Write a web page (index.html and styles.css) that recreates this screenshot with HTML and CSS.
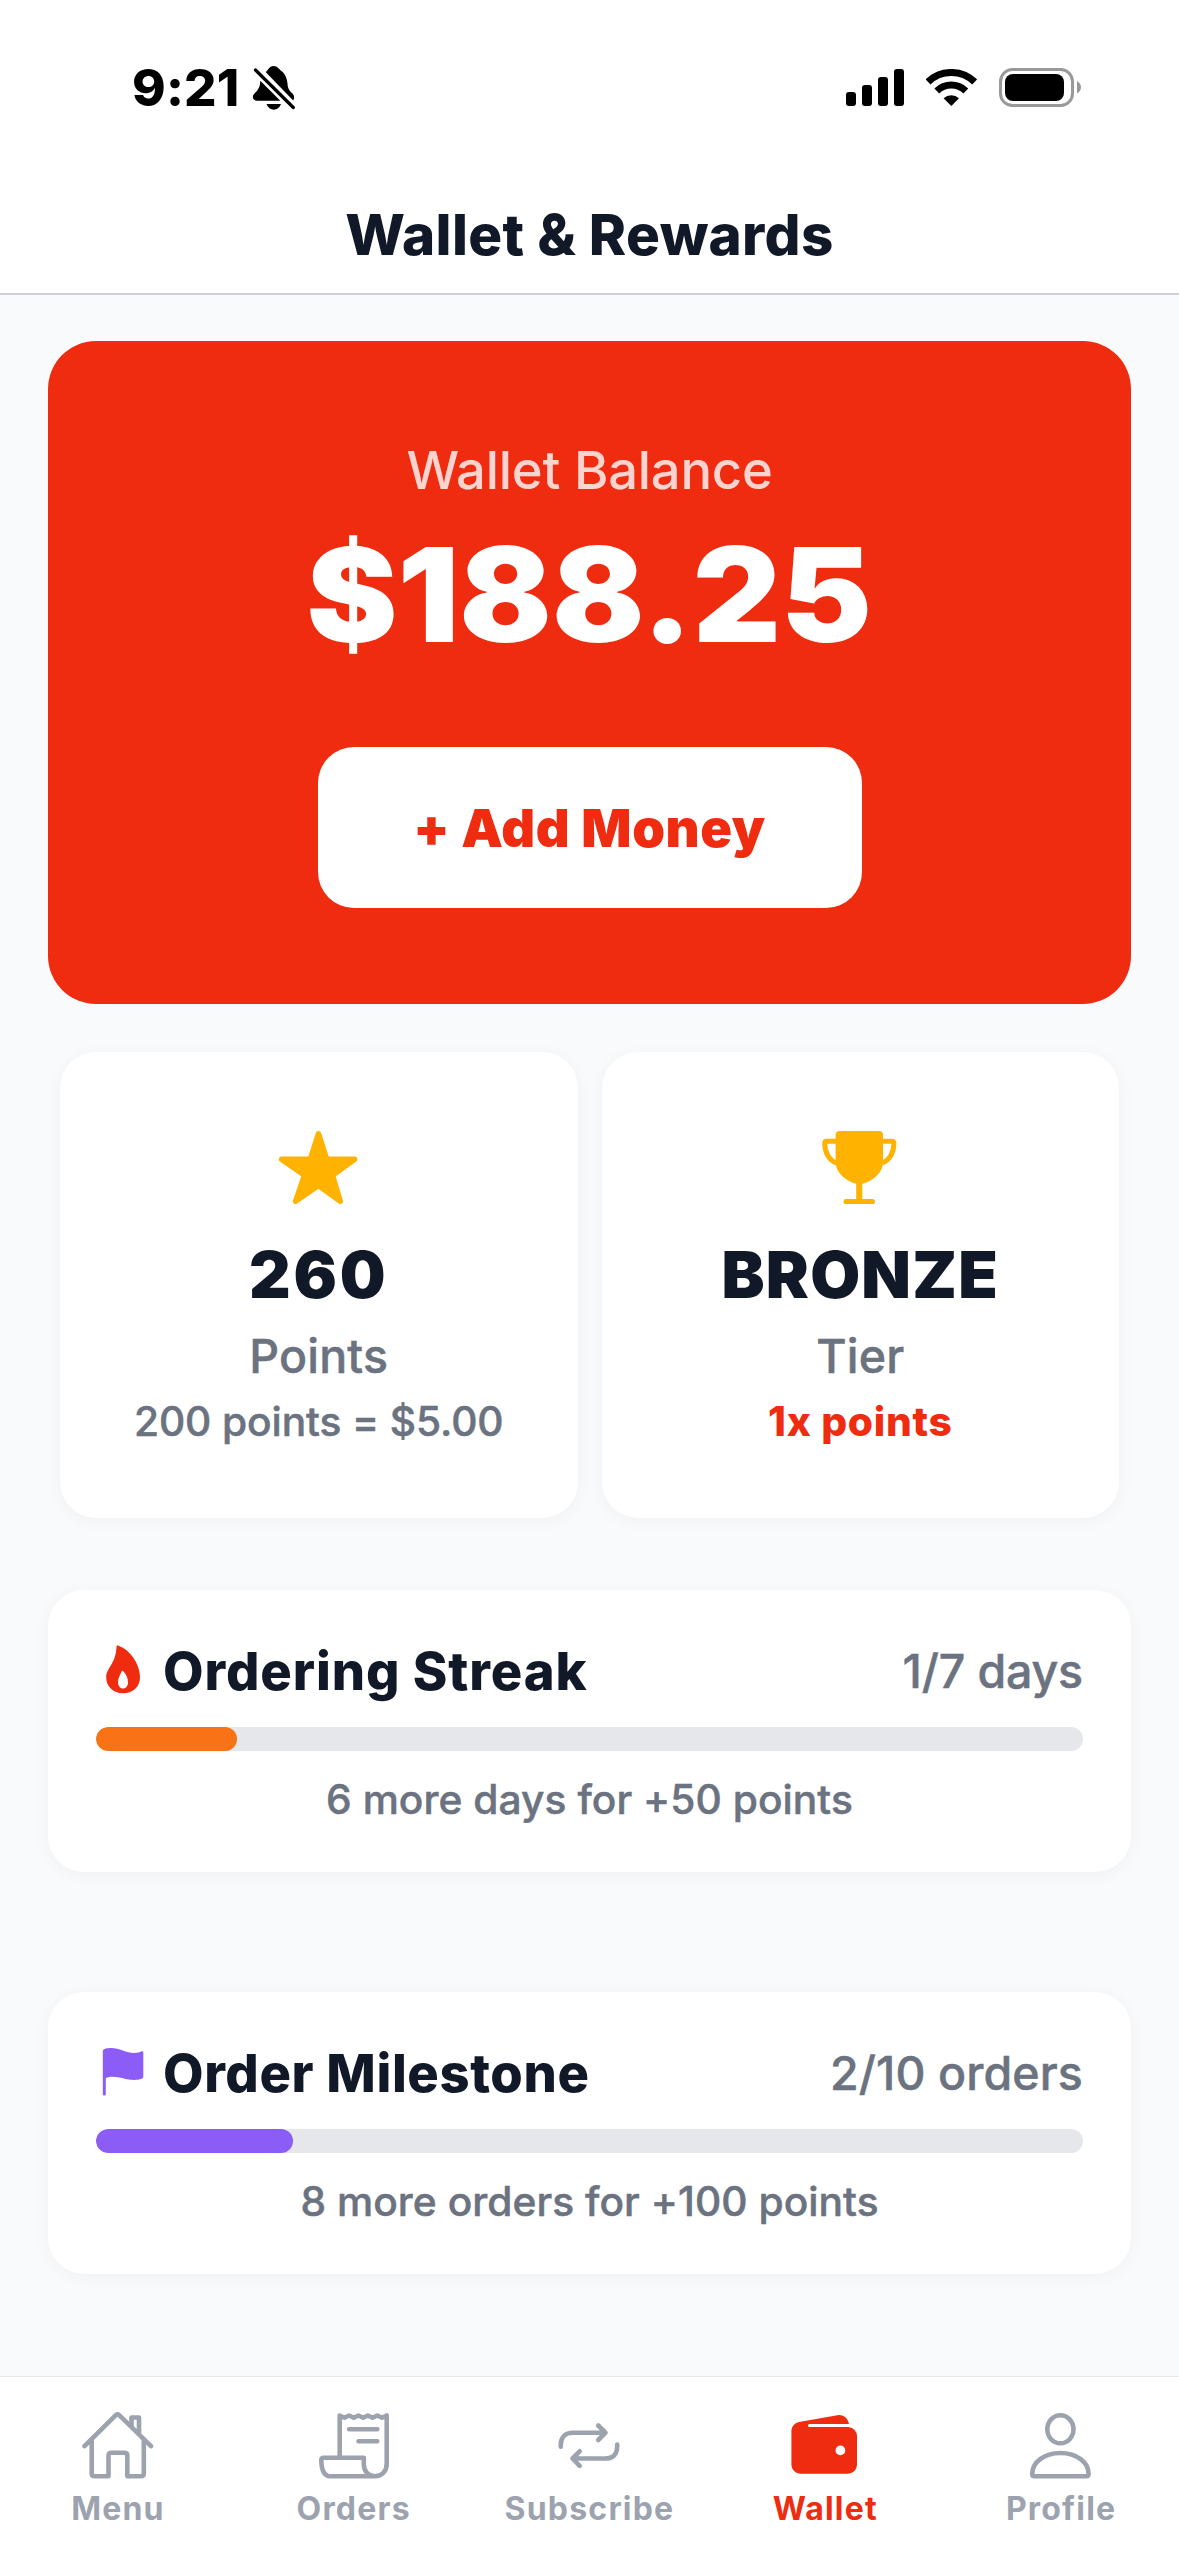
FILE: index.html
```html
<!DOCTYPE html>
<html lang="en">
<head>
<meta charset="utf-8">
<title>Wallet &amp; Rewards</title>
<link rel="stylesheet" href="styles.css">
</head>
<body>
<div class="app">
  <div class="status">
    <div class="status-left">
      <span class="time">9:21</span>
      <svg class="bell" width="46" height="46" viewBox="0 0 46 46">
        <path d="M14.6 7C17 5.8 18.2 1 22.5 1c4 0 5 3 8 4.9C34 8.500 36 13 36.500 18.500c.3 5.500 2 7.300 4.800 9.800 2.200 2.200 2.300 4.700.9 7.200z"/>
        <path d="M9.300 15.700 29.300 35.700H6C2 35.700.8 32 2.800 29.300 6 25.500 9 24 9.300 15.700z"/>
        <path d="M15.500 39h14.500c-1.500 3.700-4 5.700-7.200 5.700s-5.800-2-7.300-5.700z"/>
        <path class="slash" d="M4.500 5 42.300 42.500"/>
      </svg>
    </div>
    <div class="status-right">
      <svg width="58" height="37" viewBox="0 0 58 37">
        <rect x="0" y="23" width="10" height="14" rx="3"/><rect x="16" y="16" width="10" height="21" rx="3"/><rect x="32" y="8" width="10" height="29" rx="3"/><rect x="48" y="0" width="10" height="37" rx="3"/>
      </svg>
      <svg width="51" height="37" viewBox="0 0 51 37">
        <path class="arc" d="M2 12.900A33.500 33.500 0 0 1 48.600 12.900M10.800 22A20.800 20.800 0 0 1 39.800 22"/>
        <path d="M25.300 37 17.600 29.200a11.500 11.500 0 0 1 15.400 0z"/>
      </svg>
      <svg width="82" height="39" viewBox="0 0 82 39">
        <rect class="shell" x="1.500" y="1.500" width="72" height="36" rx="12"/>
        <rect x="6" y="6" width="59" height="27" rx="8"/>
        <path class="nub" d="M78 13c2.500 1.500 4 3.500 4 6.200s-1.500 4.900-4 6.300z"/>
      </svg>
    </div>
  </div>
  <header class="header"><h1 class="title">Wallet &amp; Rewards</h1></header>

  <main class="content">
    <section class="balance">
      <div class="balance-label">Wallet Balance</div>
      <div class="balance-amount">$188.25</div>
      <button class="add" type="button">+ Add Money</button>
    </section>

    <section class="stats">
      <article class="stat">
        <svg width="84" height="84" viewBox="0 0 84 84">
          <path class="star" d="M41.500 7.700 49.700 33.200H77.700L55.600 49.400 63.300 75.300 41.500 59.600 18.500 75.300 27.400 49.400 4.500 33.200H33.300Z"/>
        </svg>
        <div class="stat-value points-value">260</div>
        <div class="stat-label">Points</div>
        <div class="stat-note">200 points = $5.00</div>
      </article>
      <article class="stat">
        <svg width="84" height="84" viewBox="0 0 84 84">
          <path class="gold" d="M21.600 5H61a4 4 0 0 1 4 4V36C65 46 56 55 44.300 57.700V73H54.500a2.500 2.500 0 0 1 0 5.100H28a2.500 2.500 0 0 1 0-5.100H38.200V57.700C27 55 17.600 46 17.600 36V9a4 4 0 0 1 4-4z"/>
          <path class="handles" d="M18 15.200H8.500q-1.800 0-1.800 2C6.700 26 11 34.500 18.500 37M64.600 15.200h9.500q1.800 0 1.800 2C75.900 26 71.600 34.500 64.100 37"/>
        </svg>
        <div class="stat-value">BRONZE</div>
        <div class="stat-label">Tier</div>
        <div class="stat-note accent">1x points</div>
      </article>
    </section>

    <section class="progress">
      <div class="progress-head">
        <svg width="54" height="54" viewBox="0 0 54 54">
          <path class="flame" fill-rule="evenodd" d="M20.500 3C20.500 1.700 21.500 1.300 22.700 1.800 34 6 44 20 44 33.300c0 10-7.500 16-17 16s-16.800-6.500-16.800-16C10.200 24 19.800 20 20.500 3zM25.700 27.200C24.500 30.500 22 33.500 22 38c0 4 2 6.500 5 6.500s5-2.500 5-6.500c0-4.200-2.300-8-4.900-10.900q-.8-.8-1.400.1z"/>
        </svg>
        <h2 class="progress-title">Ordering Streak</h2>
        <span class="progress-count">1/7 days</span>
      </div>
      <div class="track"><div class="fill streak" style="width:14.286%"></div></div>
      <div class="progress-note">6 more days for +50 points</div>
    </section>

    <section class="progress milestone-card">
      <div class="progress-head">
        <svg width="54" height="54" viewBox="0 0 54 54">
          <path class="flag" d="M6.800 5C6.800 2.600 12 2 15.200 2 23.500 2 30 7 38 7c3.500 0 5.500-.8 7.600-1.700 1-.5 1.700.2 1.700 1.200V31c0 1.800-4.500 2.900-9 2.900-8.300 0-13.800-3.200-21.600-3.200-2.700 0-5 .4-6.900 1.300V48.500q0 1-1.500 1t-1.500-1z"/>
        </svg>
        <h2 class="progress-title milestone-title">Order Milestone</h2>
        <span class="progress-count orders-count">2/10 orders</span>
      </div>
      <div class="track"><div class="fill milestone" style="width:20%"></div></div>
      <div class="progress-note">8 more orders for +100 points</div>
    </section>
  </main>

  <nav class="tabs">
    <a class="tab">
      <svg class="line" width="72" height="72" viewBox="0 0 72 72">
        <path d="M2.500 36.200 33.800 5.200q1.700-1.500 3.400 0L69 36.200M9.700 30V63.500q0 2.800 2.800 2.800H26.500V45.500q0-2.800 2.800-2.800H42.500q2.800 0 2.800 2.800V66.300H59q2.800 0 2.800-2.800V30M49.500 17V7.500H57V24"/>
      </svg>
      <span>Menu</span>
    </a>
    <a class="tab">
      <svg class="line" width="72" height="72" viewBox="0 0 72 72">
        <path d="M21.700 47V5.500l4.700 2.300 4.700-2.300 4.700 2.300 4.700-2.300 4.700 2.300 4.700-2.300 4.700 2.300 4.700-2.300 4.700 2.300 4.700-2.300V54C68.700 61 64 66.300 57 66.300S45.800 61 45.800 54V47.700H5.500q-2.200 0-2.200 2.200C3.300 60 6 66.300 13 66.300H57M31.100 19.300H59.300M40.500 31.300H59.300"/>
      </svg>
      <span>Orders</span>
    </a>
    <a class="tab">
      <svg class="line" width="72" height="72" viewBox="0 0 72 72">
        <path d="M7.800 36.800V34.500C7.800 27 12.500 22.700 19.800 22.700H52.500M45.200 15.500 52.500 22.700 45.200 30M64.200 34.500V36.500C64.200 44 60 48.500 52.500 48.500H19.500M26.700 41.300 19.500 48.500 26.700 55.800"/>
      </svg>
      <span>Subscribe</span>
    </a>
    <a class="tab active">
      <svg width="72" height="72" viewBox="0 0 72 72">
        <path fill-rule="evenodd" d="M2.400 21.500C2.400 16 6 12.500 11.400 11.800L48.500 5.200C54.500 4.300 59 8.500 60 14H20.500a1.500 1.500 0 0 0 0 3H59a9 9 0 0 1 9 9V54.700a9 9 0 0 1-9 9H11.400a9 9 0 0 1-9-9zM51.400 35.500a4.900 4.900 0 1 0 0 9.800 4.900 4.900 0 1 0 0-9.800z"/>
      </svg>
      <span>Wallet</span>
    </a>
    <a class="tab">
      <svg class="line" width="72" height="72" viewBox="0 0 72 72">
        <ellipse cx="35.400" cy="19.300" rx="13.100" ry="14"/>
        <path d="M7.200 64C7.200 52.300 19 43 35.400 43S63.600 52.300 63.600 64q0 2.300-2.300 2.300H9.500q-2.300 0-2.300-2.300z"/>
      </svg>
      <span>Profile</span>
    </a>
  </nav>
</div>
</body>
</html>
```
FILE: styles.css
```css
* { box-sizing: border-box; }

body {
  margin: 0;
  background: #f9fafb;
  color: #111827;
  font-family: Inter, "Liberation Sans", sans-serif;
}

svg { display: block; flex: none; }
h1, h2 { margin: 0; }

.app {
  width: 1179px;
  height: 2556px;
  display: flex;
  flex-direction: column;
  overflow: hidden;
}

/* Status bar */
.status {
  height: 175px;
  padding: 0 98px 0 132px;
  display: flex;
  align-items: center;
  justify-content: space-between;
  background: #fff;
  color: #000;
}
.status-left { display: flex; align-items: center; gap: 12px; }
.status-right { display: flex; align-items: center; gap: 22px; }
.time { width: 107px; font-size: 51px; font-weight: 800; letter-spacing: .2px; line-height: 60px; }
.bell .slash { fill: none; stroke: #000; stroke-width: 3.2; stroke-linecap: round; }
.arc { fill: none; stroke: #000; stroke-width: 7; }
.shell { fill: none; stroke: #999; stroke-width: 3; }
.nub { fill: #999; }

/* Header */
.header {
  height: 120px;
  padding-top: 1px;
  display: flex;
  align-items: center;
  justify-content: center;
  background: #fff;
  border-bottom: 2px solid #cfd1d4;
}
.title { font-size: 56.5px; font-weight: 800; letter-spacing: .35px; line-height: 70px; }

.content { flex: 1; padding: 46px 48px 0; }

/* Balance */
.balance {
  height: 663px;
  padding-top: 96px;
  border-radius: 48px;
  background: #ef2b10;
  display: flex;
  flex-direction: column;
  align-items: center;
}
.balance-label {
  color: rgba(255, 255, 255, .8);
  font-size: 52.5px;
  font-weight: 500;
  letter-spacing: -.2px;
  line-height: 66px;
}
.balance-amount {
  margin-top: 11px;
  color: #fff;
  font-size: 131px;
  font-weight: 900;
  line-height: 161px;
  transform: scaleX(1.042);
}
.add {
  width: 544px;
  height: 161px;
  margin-top: 72px;
  padding: 0;
  border: 0;
  border-radius: 36px;
  background: #fff;
  color: #ef2b10;
  font: 900 52.5px/66px Inter, "Liberation Sans", sans-serif;
  letter-spacing: .6px;
}

/* Points and tier */
.stats {
  margin: 48px 12px 0;
  display: grid;
  grid-template-columns: 1fr 1fr;
  gap: 24px;
}
.stat {
  height: 466px;
  padding-top: 74px;
  border-radius: 36px;
  background: #fff;
  box-shadow: 0 3px 18px rgba(0, 0, 0, .04);
  display: flex;
  flex-direction: column;
  align-items: center;
}
.star { fill: #ffb300; stroke: #ffb300; stroke-width: 5.4; stroke-linejoin: round; }
.gold { fill: #ffb300; }
.handles { fill: none; stroke: #ffb300; stroke-width: 5; }
.stat-value {
  margin-top: 26px;
  font-size: 64.5px;
  font-weight: 900;
  letter-spacing: 1.2px;
  line-height: 79px;
}
.points-value { letter-spacing: 2.8px; }
.stat-label {
  margin-top: 12px;
  color: #6b7280;
  font-size: 46.5px;
  font-weight: 500;
  letter-spacing: .2px;
  line-height: 59px;
}
.stat-note {
  margin-top: 11px;
  color: #6b7280;
  font-size: 40.7px;
  font-weight: 500;
  letter-spacing: -.1px;
  line-height: 50px;
}
.stat-label, .stat-note, .progress-count, .progress-note { -webkit-text-stroke: .5px #6b7280; }
.accent { color: #ef2b10; font-weight: 800; letter-spacing: .7px; -webkit-text-stroke: 0; }

/* Progress cards */
.progress {
  height: 282px;
  margin-top: 72px;
  padding: 48px 48px 0;
  border-radius: 36px;
  background: #fff;
  box-shadow: 0 3px 18px rgba(0, 0, 0, .04);
}
.milestone-card { margin-top: 120px; }
.progress-head { display: flex; align-items: center; height: 66px; gap: 13px; }
.progress-title { flex: 1; font-size: 52.5px; font-weight: 800; letter-spacing: .9px; line-height: 66px; }
.milestone-title { letter-spacing: .6px; }
.progress-count { color: #6b7280; font-size: 46.5px; font-weight: 500; letter-spacing: -.15px; line-height: 64px; }
.orders-count { letter-spacing: .1px; }
.track { height: 24px; margin-top: 23px; border-radius: 12px; background: #e5e7eb; overflow: hidden; }
.fill { height: 24px; border-radius: 12px; }
.streak { background: #f97316; }
.milestone { background: #8b5cf6; }
.progress-note {
  margin-top: 24px;
  color: #6b7280;
  font-size: 40.7px;
  font-weight: 500;
  letter-spacing: .05px;
  line-height: 49px;
  text-align: center;
}
.flame { fill: #ef2b10; }
.flag { fill: #8b5cf6; }

/* Tab bar */
.tabs {
  height: 180px;
  border-top: 1px solid #e5e7eb;
  background: #fff;
  display: grid;
  grid-template-columns: repeat(5, 1fr);
}
.tab {
  padding-top: 33px;
  display: flex;
  flex-direction: column;
  align-items: center;
  gap: 7px;
  color: #9ca3af;
  font-size: 32px;
  font-weight: 700;
  letter-spacing: 1.2px;
  line-height: 39px;
}
.tab svg { fill: currentColor; }
.tab .line { fill: none; stroke: currentColor; stroke-width: 4.6; stroke-linecap: round; stroke-linejoin: round; }
.active { color: #ef2b10; }
```
